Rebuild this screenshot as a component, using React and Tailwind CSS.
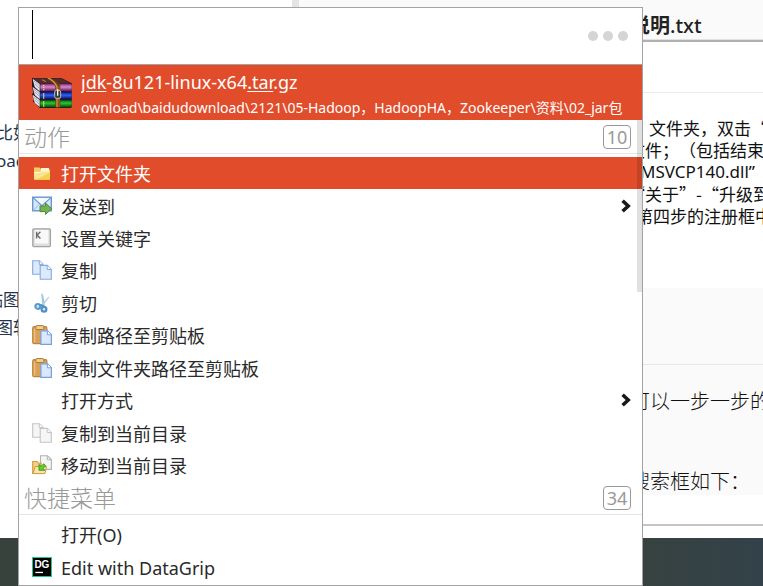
import React from 'react';

const FONT = 'font-["Noto_Sans","Noto_Sans_CJK_SC",sans-serif]';
const FONT_CJK = 'font-["Noto_Sans_CJK_SC",sans-serif]';

/* ---------- icons ---------- */

const ArchiveIcon = () => (
    <svg viewBox="0 0 120 90" className="h-[30px] w-10 shrink-0" aria-hidden="true">
        <defs>
            <linearGradient id="bookPink" x1="0" y1="0" x2="0" y2="1">
                <stop offset="0" stopColor="#8a2b80" />
                <stop offset="0.4" stopColor="#d98acb" />
                <stop offset="1" stopColor="#5c1258" />
            </linearGradient>
            <linearGradient id="bookBlue" x1="0" y1="0" x2="0" y2="1">
                <stop offset="0" stopColor="#0a1a8c" />
                <stop offset="0.4" stopColor="#2f62f5" />
                <stop offset="1" stopColor="#050b5c" />
            </linearGradient>
            <linearGradient id="bookGreen" x1="0" y1="0" x2="0" y2="1">
                <stop offset="0" stopColor="#0b6410" />
                <stop offset="0.4" stopColor="#2bc92b" />
                <stop offset="1" stopColor="#04400a" />
            </linearGradient>
        </defs>
        <path d="M0 0H88L119 16V88L116 90H24L2 70L6 66L0 48L4 44L0 24Z" fill="#24161c" />
        <path d="M2 1H88L117 17H24Z" fill="#552a2a" />
        <path d="M2 2L23 18V40L8 27Z" fill="#dfe3ee" />
        <path d="M2 27L23 42V64L8 51Z" fill="#dfe3ee" />
        <path d="M2 50L23 66V87L8 75Z" fill="#dfe3ee" />
        <path d="M6 9L22 23M8 17L22 31M6 34L22 47M8 41L22 55M6 58L22 71M8 65L22 79" stroke="#8e93a6" strokeWidth="2" />
        <rect x="25" y="18" width="94" height="22" rx="3" fill="url(#bookPink)" />
        <rect x="25" y="43" width="94" height="21" rx="3" fill="url(#bookBlue)" />
        <rect x="25" y="67" width="94" height="21" rx="3" fill="url(#bookGreen)" />
        <path d="M35 21V38M35 46V62M35 70V86" stroke="#f0d96a" strokeWidth="4" strokeDasharray="4 2" />
        <path d="M30 5L42 11" stroke="#b78a3a" strokeWidth="3" />
        <path d="M44 0H56Q74 8 85 22V88H70V26Q62 10 44 0Z" fill="#6b4012" />
        <path d="M48 0Q68 10 75 26V88" fill="none" stroke="#d99a3f" strokeWidth="4" />
        <path d="M81 24V88" stroke="#a86b22" strokeWidth="3" />
        <rect x="68" y="37" width="18" height="24" rx="5" fill="#3b3b3b" stroke="#b9b9b9" strokeWidth="3" />
        <path d="M77 34V53" stroke="#f6f6f6" strokeWidth="4" />
    </svg>
);

const Glyph = ({ children }) => (
    <svg viewBox="0 0 20 20" className="size-5 shrink-0" aria-hidden="true">
        {children}
    </svg>
);

const FolderIcon = () => (
    <Glyph>
        <path d="M2 16.5V4.5H7.5L9 6H17.5V16.5Z" fill="#f3cd68" />
        <path d="M9 5H17V8.5H9Z" fill="#fff6cf" />
        <path d="M2 9H8L9.5 7.5H18V16.5H2Z" fill="#fbe491" />
        <path d="M4 16.5L18 9.5V16.5Z" fill="#f4d44c" />
        <path d="M2.5 9.4H8.2L9.7 8H17.5" fill="none" stroke="#fffbe0" strokeWidth="1" />
    </Glyph>
);

const SendIcon = () => (
    <Glyph>
        <rect x="0.7" y="1.2" width="18.6" height="13.6" fill="#d6e7fa" stroke="#6a96cf" strokeWidth="1.4" />
        <path d="M1.5 14.3L7.5 8M18.5 14.3L12.5 8" stroke="#93b6e0" strokeWidth="1" />
        <path d="M1.3 1.9L10 9.7L18.7 1.9" fill="#f4f9ff" stroke="#6a96cf" strokeWidth="1.2" />
        <path d="M8 10H13.5V7L19.7 12.7L13.5 18.4V15.6H8Z" fill="#74b34f" stroke="#4a8c35" strokeWidth="1" />
    </Glyph>
);

const KeywordIcon = () => (
    <Glyph>
        <rect x="0.8" y="0.8" width="17.6" height="17.8" rx="1" fill="#dedede" stroke="#a3a3a3" strokeWidth="1.3" />
        <rect x="2.8" y="2" width="13.6" height="13.5" rx="1" fill="#f9f9f9" />
        <path d="M4.6 3.8V10.4M8.4 3.8L5.2 7.1L8.4 10.4" fill="none" stroke="#6a6a6a" strokeWidth="1.4" />
    </Glyph>
);

const Sheets = ({ fill, stroke }) => (
    <>
        <path d="M0.7 0.7H7.5L11 4.2V14.3H0.7Z" fill={fill} stroke={stroke} strokeWidth="1.1" />
        <path d="M7.3 0.8V4.4H11" fill="#fff" stroke={stroke} strokeWidth="1" />
        <path d="M8.2 5.4H15.3L19.3 9.4V19.2H8.2Z" fill={fill} stroke={stroke} strokeWidth="1.1" />
        <path d="M15.2 5.5V9.5H19.2" fill="#fff" stroke={stroke} strokeWidth="1" />
    </>
);

const CopyIcon = () => (
    <Glyph>
        <Sheets fill="#dceafd" stroke="#86a9de" />
    </Glyph>
);

const CopyHereIcon = () => (
    <Glyph>
        <Sheets fill="#f6f6f6" stroke="#c4c4c4" />
    </Glyph>
);

const CutIcon = () => (
    <Glyph>
        <path d="M9.2 0.5L11 1.5L12.8 12L10.5 13.5Z" fill="#9fc3dc" />
        <path d="M17.2 3L16.8 5L10.8 13L9 12Z" fill="#b4d0e2" />
        <circle cx="5.8" cy="13.4" r="2.4" fill="#d8eaf7" stroke="#5a9bce" strokeWidth="2.2" />
        <circle cx="12" cy="16.2" r="2.4" fill="#d8eaf7" stroke="#4d90c8" strokeWidth="2.2" />
        <path d="M7.5 11.8L12 13.2" stroke="#4d90c8" strokeWidth="2" />
    </Glyph>
);

const PasteIcon = () => (
    <Glyph>
        <rect x="0.7" y="1.7" width="14.2" height="17" rx="1.5" fill="#d9a057" stroke="#bd8440" strokeWidth="1.2" />
        <path d="M2.6 3.5V17.5" stroke="#ebbd7c" strokeWidth="1.6" />
        <rect x="3.8" y="0.6" width="8" height="4" rx="1" fill="#ecd28e" stroke="#a8782c" strokeWidth="1" />
        <path d="M8.9 5.8H15.6L19.4 9.6V19.3H8.9Z" fill="#d9e8fc" stroke="#7aa0dc" strokeWidth="1.2" />
        <path d="M15.4 6V9.8H19.2" fill="#fff" stroke="#7aa0dc" strokeWidth="1" />
    </Glyph>
);

const MoveHereIcon = () => (
    <Glyph>
        <path d="M8.5 0.7H15.5L19.4 4.6V14.4H8.5Z" fill="#f4f4f4" stroke="#b3b3b3" strokeWidth="1.1" />
        <path d="M15.3 0.9V4.8H19.2" fill="none" stroke="#b3b3b3" strokeWidth="1" />
        <path d="M0.7 18.5V6.5H5L6.5 8.3H9V18.5Z" fill="#f5cf7d" stroke="#cf9a43" strokeWidth="1.1" />
        <path d="M1 18.6L3.2 11.5H14.5L13 18.6Z" fill="#fbe3ab" stroke="#cf9a43" strokeWidth="1" />
        <path d="M7 9.5V15.3H12.8L11 13.4L13.8 10.8L11.6 8.8L9 11.4Z" fill="#5ed32b" stroke="#3a9420" strokeWidth="0.9" />
    </Glyph>
);

const DataGripIcon = () => (
    <Glyph>
        <rect width="20" height="20" fill="#1ec98a" />
        <rect x="1" y="1" width="18" height="18" fill="#000" />
        <text x="2.4" y="10.8" fontSize="10" fontWeight="700" fill="#fff" fontFamily="Liberation Sans, sans-serif">
            DG
        </text>
        <rect x="3.4" y="14.8" width="7.6" height="1.3" fill="#fff" />
    </Glyph>
);

const Chevron = () => (
    <svg viewBox="0 0 10 14" className="mr-[7px] h-3.5 w-2.5 shrink-0" aria-hidden="true">
        <path d="M1.6 1.8L7.2 7L1.6 12.2" fill="none" stroke="#1a1a1a" strokeWidth="3.6" />
    </svg>
);

/* ---------- data ---------- */

const sections = [
    {
        title: '动作',
        count: 10,
        items: [
            { label: '打开文件夹', icon: FolderIcon, active: true },
            { label: '发送到', icon: SendIcon, submenu: true },
            { label: '设置关键字', icon: KeywordIcon },
            { label: '复制', icon: CopyIcon },
            { label: '剪切', icon: CutIcon },
            { label: '复制路径至剪贴板', icon: PasteIcon },
            { label: '复制文件夹路径至剪贴板', icon: PasteIcon },
            { label: '打开方式', submenu: true },
            { label: '复制到当前目录', icon: CopyHereIcon },
            { label: '移动到当前目录', icon: MoveHereIcon },
        ],
    },
    {
        title: '快捷菜单',
        count: 34,
        items: [{ label: '打开(O)' }, { label: 'Edit with DataGrip', icon: DataGripIcon }],
    },
];

/* ---------- launcher ---------- */

const MenuItem = ({ label, icon: Icon, active, submenu }) => (
    <li className="flex min-h-6 flex-1">
        <button
            type="button"
            className={`flex w-full items-center pr-1 pl-[13px] text-left text-lg leading-7 ${
                active ? 'bg-[#e14d2b] text-white' : 'text-[#2a2a2a]'
            }`}
        >
            {Icon ? <Icon /> : <span className="size-5 shrink-0" />}
            <span className="ml-[9px] flex-1 truncate pt-0.5">{label}</span>
            {submenu && <Chevron />}
        </button>
    </li>
);

const Section = ({ title, count, items }) => (
    <section className="contents">
        <header className="mb-[3px] flex h-[34px] shrink-0 items-center justify-between border-b border-[#e6e6e6] pr-[11px] pl-[5px] text-[#999]">
            <h2 className="text-[23px] leading-8 font-light">{title}</h2>
            <span className="flex h-6 w-7 items-center justify-center rounded border border-[#999] text-lg leading-none">
                {count}
            </span>
        </header>
        <ul className="contents">
            {items.map((item) => (
                <MenuItem key={item.label} {...item} />
            ))}
        </ul>
    </section>
);

const Launcher = () => (
    <main className="absolute top-[7px] right-[120px] bottom-0 left-[18px] flex flex-col border border-[#a3a3a3] bg-white">
        <div className="flex h-[57px] shrink-0 items-center border-b border-[#a3a3a3] pr-3.5 pl-[13px]">
            <span className="mb-1 h-[49px] w-px bg-black" />
            <input
                type="text"
                aria-label="搜索"
                className="h-12 min-w-0 flex-1 bg-transparent px-1 text-2xl caret-transparent outline-none"
            />
            <button type="button" aria-label="更多" className="flex gap-[5px]">
                <span className="size-2.5 rounded-full bg-[#d5d5d5]" />
                <span className="size-2.5 rounded-full bg-[#d5d5d5]" />
                <span className="size-2.5 rounded-full bg-[#d5d5d5]" />
            </button>
        </div>

        <div className="flex h-[55px] shrink-0 items-center gap-[9px] bg-[#e14d2b] pr-3 pl-[13px] text-white">
            <ArchiveIcon />
            <div className="min-w-0 flex-1 overflow-hidden pt-0.5 whitespace-nowrap">
                <p className="text-lg leading-7">
                    <u className="underline-offset-2">jdk</u>-<u className="underline-offset-2">8</u>u121-linux-x64
                    <u className="underline-offset-2">.tar</u>.gz
                </p>
                <p className="text-sm leading-6">
                    ownload\baidudownload\2121\05-Hadoop，HadoopHA，Zookeeper\资料\02_jar包
                </p>
            </div>
        </div>

        <div className="relative flex min-h-0 flex-1 flex-col pb-0.5">
            {sections.map((section) => (
                <Section key={section.title} {...section} />
            ))}
            <div className="absolute top-0 right-0 h-[172px] w-[5px] bg-black/12" />
        </div>
    </main>
);

/* ---------- windows behind the launcher ---------- */

const LeftDocument = () => (
    <div className="w-[292px] shrink-0 bg-white pt-[119px] text-[17px] leading-7 whitespace-nowrap text-[#24344d]">
        <div className="-ml-1">
            <p>比如</p>
            <p>oad</p>
        </div>
        <div className="mt-[111px] -ml-3.5">
            <p>贴图</p>
            <p className="ml-2.5">图软件</p>
        </div>
    </div>
);

const RightDocument = () => (
    <div className="flex min-w-0 flex-1 flex-col overflow-hidden whitespace-nowrap">
        <h1 className="h-10 shrink-0 border-b border-[#e2e2e2] bg-[#fafafa] pt-2.5 pl-[331px] text-xl leading-8 font-bold text-[#222]">
            说明<span className="font-medium">.txt</span>
        </h1>
        <div className="h-[53px] shrink-0 border-t-2 border-b border-t-[#b0b0b0] border-b-[#ececec] bg-white" />
        <div
            className={`h-[195px] shrink-0 bg-white pt-6 text-[17px] leading-[22px] text-[#111] [text-spacing-trim:space-all] ${FONT_CJK}`}
        >
            <p className="pl-[350px]">文件夹，双击“</p>
            <p className="pl-[329px]">文件；（包括结束提</p>
            <p className={`pl-[341px] ${FONT}`}>MSVCP140.dll”</p>
            <p className="pl-[329px]">“关于”-“升级到</p>
            <p className="pl-[337px]">第四步的注册框中</p>
        </div>
        <div className="h-[77px] shrink-0 border-b border-[#e6e6ee] bg-[#fafafa]" />
        <div className="h-[130px] shrink-0 bg-[#fafafa] pt-[21px] pl-[331px] text-xl leading-8 font-light text-[#111]">
            <p>可以一步一步的</p>
            <p className="mt-12">搜索框如下：</p>
        </div>
        <div className="h-[31px] shrink-0 border-b-2 border-[#c4c4c4] bg-white" />
        <div className="flex-1 bg-white" />
    </div>
);

export default function App() {
    return (
        <div lang="zh-CN" className={`relative flex h-screen flex-col overflow-hidden bg-white ${FONT}`}>
            <div className="flex min-h-0 flex-1 overflow-hidden">
                <LeftDocument />
                <div className="w-[7px] shrink-0 bg-[#e4e4e4]" />
                <RightDocument />
            </div>
            <div className="h-12 shrink-0 bg-linear-to-r from-[#38423d] from-80% to-[#33424a]" />
            <Launcher />
        </div>
    );
}
